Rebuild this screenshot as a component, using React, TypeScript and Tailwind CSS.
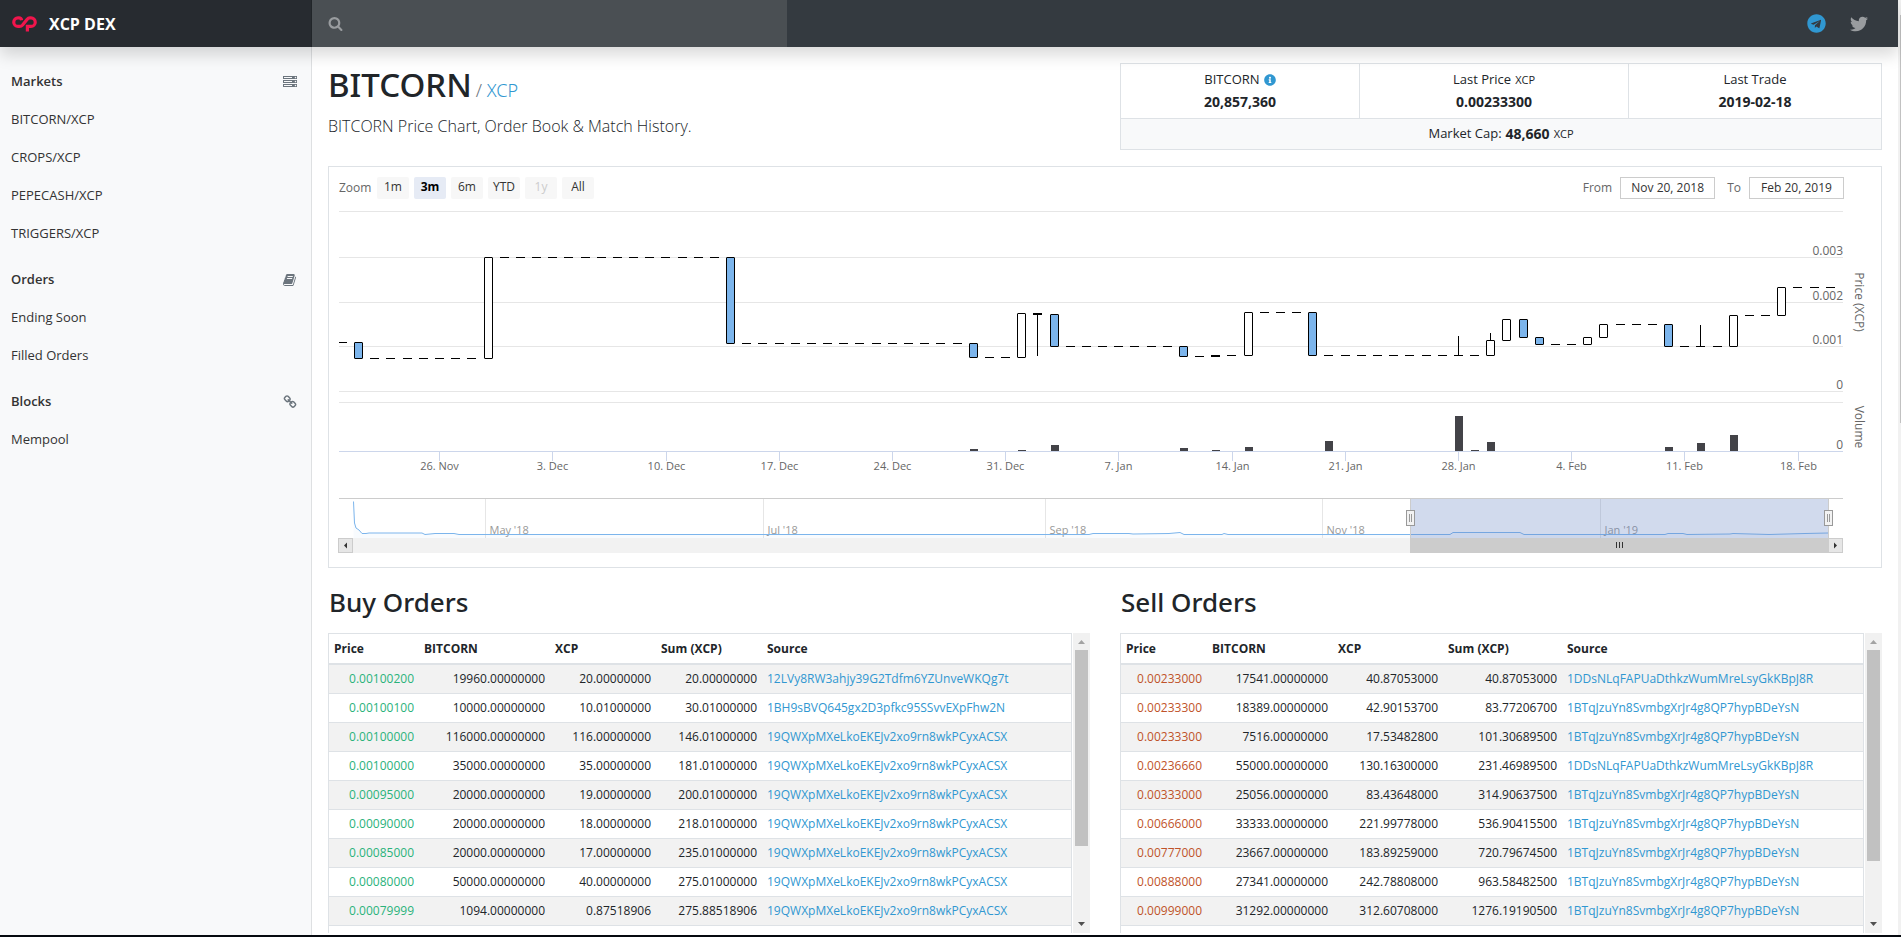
import { ReactNode, useState } from "react";
import { FaInfoCircle, FaTelegram, FaTwitter } from "react-icons/fa";

const SEARCH_PATH =
  "M1216 832q0-185-131.500-316.500t-316.500-131.500-316.500 131.500-131.500 316.500 131.500 316.500 316.500 131.500 316.500-131.500 131.500-316.500zm512 832q0 52-38 90t-90 38q-54 0-90-38l-343-342q-179 124-399 124-143 0-273.500-55.500t-225-150-150-225-55.500-273.500 55.500-273.500 150-225 225-150 273.500-55.500 273.500 55.500 225 150 150 225 55.500 273.500q0 220-124 399l343 343q37 37 37 90z";
const SERVER_PATH =
  "M128 1408h1024v-128h-1024v128zm0-512h1024v-128h-1024v128zm1568 448q0-40-28-68t-68-28-68 28-28 68 28 68 68 28 68-28 28-68zm-1568-960h1024v-128h-1024v128zm1568 448q0-40-28-68t-68-28-68 28-28 68 28 68 68 28 68-28 28-68zm0-512q0-40-28-68t-68-28-68 28-28 68 28 68 68 28 68-28 28-68zm96 832v384h-1792v-384h1792zm0-512v384h-1792v-384h1792zm0-512v384h-1792v-384h1792z";
const BOOK_PATH =
  "M1639 478q40 57 18 129l-275 906q-19 64-76.500 107.500t-122.500 43.500h-923q-77 0-148.500-53.500t-99.500-131.500q-24-67-2-127 0-4 3-27t4-37q1-8-3-21.500t-3-19.500q2-11 8-21t16.500-23.500 16.500-23.500q23-38 45-91.500t30-91.500q3-10 .5-30t-.5-28q3-11 17-28t17-23q21-36 42-92t25-90q1-9-2.500-32t.5-28q4-13 22-30.500t22-22.500q19-26 42.500-84.500t27.500-96.500q1-8-3-25.500t-2-26.500q2-8 9-18t18-23 17-21q8-12 16.500-30.500t15-35 16-36 19.500-32 26.500-23.500 36-11.500 47.500 5.500l-1 3q38-9 51-9h761q74 0 114 56t18 130l-274 906q-36 119-71.500 153.500t-128.500 34.500h-869q-27 0-38 15-11 16-1 43 24 70 144 70h923q29 0 56-15.500t35-41.500l300-987q7-22 5-57 38 15 59 43zm-1064 2q-4 13 2 22.500t20 9.500h608q13 0 25.500-9.500t16.500-22.500l21-64q4-13-2-22.500t-20-9.500h-608q-13 0-25.500 9.500t-16.500 22.500zm-83 256q-4 13 2 22.500t20 9.500h608q13 0 25.500-9.500t16.500-22.500l21-64q4-13-2-22.500t-20-9.500h-608q-13 0-25.500 9.500t-16.500 22.500z";
const CHAIN_PATH =
  "M1520 1216q0-40-28-68l-208-208q-28-28-68-28-42 0-72 32 3 3 19 18.500t21.500 21.500 15 19 13 25.500 3.500 27.500q0 40-28 68t-68 28q-15 0-27.500-3.500t-25.500-13-19-15-21.500-21.500-18.500-19q-33 31-33 73 0 40 28 68l206 207q27 27 68 27 40 0 68-26l147-146q28-28 28-67zm-703-705q0-40-28-68l-206-207q-28-28-68-28-39 0-68 27l-147 146q-28 28-28 67 0 40 28 68l208 208q27 27 68 27 42 0 72-31-3-3-19-18.500t-21.500-21.500-15-19-13-25.500-3.500-27.500q0-40 28-68t68-28q15 0 27.500 3.500t25.500 13 19 15 21.500 21.500 18.500 19q33-31 33-73zm895 705q0 120-85 203l-147 146q-83 83-203 83-121 0-204-85l-206-207q-83-83-83-203 0-123 88-209l-88-88q-86 88-208 88-120 0-204-84l-208-208q-84-84-84-204t85-203l147-146q83-83 203-83 121 0 204 85l206 207q83 83 83 203 0 123-88 209l88 88q86-88 208-88 120 0 204 84l208 208q84 84 84 204z";

const sections = [
  { title: "Markets", icon: SERVER_PATH, links: ["BITCORN/XCP", "CROPS/XCP", "PEPECASH/XCP", "TRIGGERS/XCP"] },
  { title: "Orders", icon: BOOK_PATH, links: ["Ending Soon", "Filled Orders"] },
  { title: "Blocks", icon: CHAIN_PATH, links: ["Mempool"] },
];

const ranges = ["1m", "3m", "6m", "YTD", "1y", "All"];

type Order = [price: string, amount: string, total: string, sum: string, source: string];

const buyOrders: Order[] = [
  ["0.00100200", "19960.00000000", "20.00000000", "20.00000000", "12LVy8RW3ahjy39G2Tdfm6YZUnveWKQg7t"],
  ["0.00100100", "10000.00000000", "10.01000000", "30.01000000", "1BH9sBVQ645gx2D3pfkc95SSvvEXpFhw2N"],
  ["0.00100000", "116000.00000000", "116.00000000", "146.01000000", "19QWXpMXeLkoEKEJv2xo9rn8wkPCyxACSX"],
  ["0.00100000", "35000.00000000", "35.00000000", "181.01000000", "19QWXpMXeLkoEKEJv2xo9rn8wkPCyxACSX"],
  ["0.00095000", "20000.00000000", "19.00000000", "200.01000000", "19QWXpMXeLkoEKEJv2xo9rn8wkPCyxACSX"],
  ["0.00090000", "20000.00000000", "18.00000000", "218.01000000", "19QWXpMXeLkoEKEJv2xo9rn8wkPCyxACSX"],
  ["0.00085000", "20000.00000000", "17.00000000", "235.01000000", "19QWXpMXeLkoEKEJv2xo9rn8wkPCyxACSX"],
  ["0.00080000", "50000.00000000", "40.00000000", "275.01000000", "19QWXpMXeLkoEKEJv2xo9rn8wkPCyxACSX"],
  ["0.00079999", "1094.00000000", "0.87518906", "275.88518906", "19QWXpMXeLkoEKEJv2xo9rn8wkPCyxACSX"],
];

const sellOrders: Order[] = [
  ["0.00233000", "17541.00000000", "40.87053000", "40.87053000", "1DDsNLqFAPUaDthkzWumMreLsyGkKBpJ8R"],
  ["0.00233300", "18389.00000000", "42.90153700", "83.77206700", "1BTqJzuYn8SvmbgXrJr4g8QP7hypBDeYsN"],
  ["0.00233300", "7516.00000000", "17.53482800", "101.30689500", "1BTqJzuYn8SvmbgXrJr4g8QP7hypBDeYsN"],
  ["0.00236660", "55000.00000000", "130.16300000", "231.46989500", "1DDsNLqFAPUaDthkzWumMreLsyGkKBpJ8R"],
  ["0.00333000", "25056.00000000", "83.43648000", "314.90637500", "1BTqJzuYn8SvmbgXrJr4g8QP7hypBDeYsN"],
  ["0.00666000", "33333.00000000", "221.99778000", "536.90415500", "1BTqJzuYn8SvmbgXrJr4g8QP7hypBDeYsN"],
  ["0.00777000", "23667.00000000", "183.89259000", "720.79674500", "1BTqJzuYn8SvmbgXrJr4g8QP7hypBDeYsN"],
  ["0.00888000", "27341.00000000", "242.78808000", "963.58482500", "1BTqJzuYn8SvmbgXrJr4g8QP7hypBDeYsN"],
  ["0.00999000", "31292.00000000", "312.60708000", "1276.19190500", "1BTqJzuYn8SvmbgXrJr4g8QP7hypBDeYsN"],
];

// Days are counted from Nov 20, y values are in chart units.
// [first day, last day, y] for days without a price change
const flats: [number, number, number][] = [
  [0, 0, 143.5], [2, 8, 159.5], [10, 23, 58.5], [25, 38, 144.5], [40, 41, 158.5], [43, 43, 114.5],
  [43, 43, 115.5], [45, 51, 147.5], [53, 53, 157.5], [54, 54, 156.5], [54, 54, 157.5], [55, 55, 156.5],
  [57, 59, 113.5], [61, 70, 156.5], [75, 76, 145.5], [79, 81, 125.5], [83, 85, 147.5], [87, 88, 116.5],
  [90, 92, 88.5],
];
// [day, top, bottom, falling]
const candles: [number, number, number, boolean][] = [
  [1, 143.5, 159.5, true], [9, 58.5, 159.5, false], [24, 58.5, 144.5, true], [39, 144.5, 158.5, true],
  [42, 114.5, 158.5, false], [44, 115.5, 147.5, true], [52, 147.5, 157.5, true], [56, 113.5, 156.5, false],
  [60, 113.5, 156.5, true], [71, 141.5, 156.5, false], [72, 120.5, 141.5, false], [73, 120.5, 138.5, true],
  [74, 138.5, 145.5, true], [77, 138.5, 145.5, false], [78, 125.5, 138.5, false], [82, 125.5, 147.5, true],
  [86, 116.5, 147.5, false], [89, 88.5, 116.5, false],
];
// [day, top, bottom]
const wicks: [number, number, number][] = [[43, 115, 157], [69, 137, 157], [71, 134, 142], [84, 126, 147]];
// [day, height]
const volumes: [number, number][] = [
  [39, 2], [42, 1], [44, 6], [52, 3], [54, 1], [56, 4], [61, 10], [69, 35], [70, 1], [71, 9], [82, 4], [84, 8],
  [86, 16],
];
const weeks = [
  "26. Nov", "3. Dec", "10. Dec", "17. Dec", "24. Dec", "31. Dec", "7. Jan", "14. Jan", "21. Jan", "28. Jan",
  "4. Feb", "11. Feb", "18. Feb",
];
const priceLabels: [string, number][] = [["0.003", 56], ["0.002", 101], ["0.001", 145], ["0", 190], ["0", 250]];
const months: [string, number][] = [
  ["May '18", 156.5], ["Jul '18", 434.5], ["Sep '18", 716.5], ["Nov '18", 993.5], ["Jan '19", 1271.5],
];

const dayX = (day: number, start = 13.48) => Math.floor(start + day * 16.172) + 0.5;
const NAV_LINE =
  "M24.500 302.500L25.500 324L27 329L30 331L33 334.500L37 334.500L40 334L93 334L96 335.500L106 334.500L125 334.500L130 335.500L210 335.500L760 335.500L764 334.500L800 334.500L804 335L840 334.500L851 333.500L855 335.500L893 335.500L895 334.500L899 335.500L1070 335.500L1121 335.500L1124 333.500L1191 333.500L1195 335.500L1336 335.500L1339 334.500L1354 334.500L1358 335.500L1401 335L1404 334.500L1440 335.500L1476 334.500L1499 334";

function Glyph({ d, className }: { d: string; className: string }) {
  return (
    <svg className={className} viewBox="0 0 1792 1792" fill="currentColor" aria-hidden="true">
      <path d={d} />
    </svg>
  );
}

function Header() {
  return (
    <header className="relative z-10 flex h-[47px] items-stretch bg-[#343a40] shadow-[0_8px_16px_rgba(0,0,0,0.15)]">
      <a href="#" className="flex w-[312px] shrink-0 items-center gap-3 border-r border-[#212529] bg-[#272b30] pl-3 text-base font-bold text-white">
        <svg className="h-4 w-[25px]" viewBox="0 0 25 16" fill="none" stroke="#f0154c" strokeWidth="3.2" aria-hidden="true">
          <path d="M9.600 4.200Q9.200 1.900 7 1.900H6A4.200 4.200 0 0 0 6 10.400H7.500Q9.400 10.400 10.600 9L15 3.400Q16.200 1.900 18 1.900H19A4.200 4.200 0 0 1 19 10.400H15.400V15.600" />
        </svg>
        XCP DEX
      </a>
      <label className="flex w-1/4 items-center bg-[#4a4f53] pl-4 text-[#999c9f]">
        <Glyph d={SEARCH_PATH} className="size-[15px]" />
        <input type="text" aria-label="Search" className="h-full min-w-0 flex-1 bg-transparent px-2 text-sm text-white outline-none" />
      </label>
      <nav className="ml-auto flex items-center gap-6 pr-[30px]">
        <a href="#" aria-label="Telegram" className="text-[#3097d1]">
          <FaTelegram className="size-[19px]" />
        </a>
        <a href="#" aria-label="Twitter" className="text-[#999c9f]">
          <FaTwitter className="size-[18px]" />
        </a>
      </nav>
    </header>
  );
}

function Sidebar() {
  return (
    <aside className="w-[312px] shrink-0 border-r border-[#dee0e2] bg-[#f8f9fa] pt-4 text-[13px] text-[#333333]">
      {sections.map((section) => (
        <section key={section.title} className="mb-2">
          <h6 className="flex h-[38px] items-center justify-between pr-[14px] pl-[11px] font-semibold">
            {section.title}
            <Glyph d={section.icon} className="size-[14px] text-[#6c757d]" />
          </h6>
          <ul>
            {section.links.map((link) => (
              <li key={link}>
                <a href="#" className="flex h-[38px] items-center pl-[11px]">
                  {link}
                </a>
              </li>
            ))}
          </ul>
        </section>
      ))}
    </aside>
  );
}

function Stat({ label, value }: { label: ReactNode; value: string }) {
  return (
    <div className="flex flex-col items-center justify-center border-r border-[#dee2e6] last:border-r-0">
      <div className="flex h-[22px] items-center gap-1">{label}</div>
      <div className="flex h-[22px] items-center text-sm font-bold">{value}</div>
    </div>
  );
}

function Stats() {
  return (
    <div className="border border-[#dee2e6] text-[13px]">
      <div className="grid h-[54px] grid-cols-[239fr_269fr_252fr]">
        <Stat
          label={
            <>
              BITCORN <FaInfoCircle className="size-3 text-[#3097d1]" />
            </>
          }
          value="20,857,360"
        />
        <Stat
          label={
            <>
              Last Price <span className="text-[11px]">XCP</span>
            </>
          }
          value="0.00233300"
        />
        <Stat label="Last Trade" value="2019-02-18" />
      </div>
      <div className="flex h-[31px] items-center justify-center gap-1 border-t border-[#dee2e6] bg-[#f8f9fa]">
        Market Cap: <b className="text-sm">48,660</b> <span className="text-[11px]">XCP</span>
      </div>
    </div>
  );
}

function Chart() {
  return (
    <svg className="block h-auto w-full" viewBox="0 0 1552 368" fontSize="12" fill="#666666" role="img" aria-label="BITCORN price and volume">
      {/* grid */}
      <path d="M10 12.500H1514M10 58.500H1514M10 103.500H1514M10 147.500H1514M10 192.500H1514M10 203.500H1514" stroke="#e6e6e6" />
      <path d="M10 252.500H1514" stroke="#ccd6eb" />

      {/* price */}
      <g stroke="#000000">
        {flats.map(([from, to, y]) =>
          Array.from({ length: to - from + 1 }, (_, i) => {
            const x = dayX(from + i);
            return <path key={`${from}-${i}-${y}`} d={`M${Math.max(x - 4.5, 10)} ${y}H${x + 4.5}`} />;
          })
        )}
        {wicks.map(([day, top, bottom]) => (
          <path key={day} d={`M${dayX(day)} ${top}V${bottom}`} />
        ))}
        {candles.map(([day, top, bottom, falling]) => (
          <rect key={day} x={dayX(day) - 4} y={top} width="8" height={bottom - top} rx="0.5" fill={falling ? "#7cb5ec" : "#ffffff"} />
        ))}
      </g>

      {/* volume */}
      {volumes.map(([day, height]) => (
        <rect key={day} x={dayX(day) - 3.5} y={252 - height} width="8" height={height} fill="#434348" />
      ))}

      {weeks.map((week, i) => {
        const x = dayX(6 + i * 7, 13.68);
        return (
          <g key={week}>
            <path d={`M${x} 253V262`} stroke="#ccd6eb" />
            <text x={x} y="271" fontSize="11" textAnchor="middle">{week}</text>
          </g>
        );
      })}
      {priceLabels.map(([label, y]) => (
        <text key={y} x="1514" y={y} textAnchor="end">{label}</text>
      ))}
      <text transform="translate(1526 103) rotate(90)" textAnchor="middle">Price (XCP)</text>
      <text transform="translate(1526 228) rotate(90)" textAnchor="middle">Volume</text>

      {/* navigator */}
      {months.map(([month, x]) => (
        <g key={month}>
          <path d={`M${x} 300V339`} stroke="#e6e6e6" />
          <text x={x + 4} y="335" fontSize="11" fill="#999999">{month}</text>
        </g>
      ))}
      <path d={`${NAV_LINE}V339H24.500Z`} fill="#7cb5ec" fillOpacity="0.05" />
      <path d={NAV_LINE} fill="none" stroke="#7cb5ec" />
      <rect x="1081" y="300" width="419" height="39" fill="#6685c2" fillOpacity="0.3" />
      <path d="M10 299.500H1514M1081.500 299.500V339M1499.500 299.500V339" stroke="#cccccc" />
      {[1081, 1499].map((x) => (
        <g key={x} stroke="#999999">
          <rect x={x - 3.5} y="311.500" width="8" height="15" fill="#f2f2f2" />
          <path d={`M${x - 0.5} 315V323M${x + 1.5} 315V323`} />
        </g>
      ))}

      {/* scrollbar */}
      <rect x="24" y="339" width="1058" height="15" fill="#f2f2f2" />
      <rect x="1081" y="339" width="419" height="15" fill="#cccccc" />
      <path d="M1287.500 343V349M1290.500 343V349M1293.500 343V349" stroke="#333333" />
      <rect x="9.500" y="339.500" width="14" height="14" fill="#e6e6e6" stroke="#cccccc" />
      <path d="M18 343.500V349.500L15 346.500Z" fill="#333333" />
      <rect x="1499.500" y="339.500" width="14" height="14" fill="#e6e6e6" stroke="#cccccc" />
      <path d="M1505 343.500V349.500L1508 346.500Z" fill="#333333" />
    </svg>
  );
}

function ChartCard() {
  const [range, setRange] = useState("3m");
  return (
    <section className="mt-4 border border-[#dee2e6] bg-white">
      <div className="flex h-8 items-end pr-[37px] pl-[10px] text-xs text-[#666666]">
        <div className="flex items-center gap-[5px]">
          <span className="w-[33px]">Zoom</span>
          {ranges.map((item) => (
            <button
              key={item}
              onClick={() => setRange(item)}
              disabled={item === "1y"}
              className={`h-[22px] w-8 rounded-xs pb-[2px] leading-[20px] disabled:text-[#cccccc] ${
                item === range ? "bg-[#e6ebf5] font-bold text-black" : "bg-[#f7f7f7] text-[#333333]"
              }`}
            >
              {item}
            </button>
          ))}
        </div>
        <div className="ml-auto flex items-center">
          <label htmlFor="from">From</label>
          <input id="from" defaultValue="Nov 20, 2018" className="ml-2 h-[22px] w-[95px] border border-[#cccccc] pb-[2px] text-center text-[#333333]" />
          <label htmlFor="to" className="ml-3">To</label>
          <input id="to" defaultValue="Feb 20, 2019" className="ml-2 h-[22px] w-[95px] border border-[#cccccc] pb-[2px] text-center text-[#333333]" />
        </div>
      </div>
      <Chart />
    </section>
  );
}

type OrderBookProps = { title: string; orders: Order[]; cols: string[]; priceClass: string; thumbClass: string };

function OrderBook({ title, orders, cols, priceClass, thumbClass }: OrderBookProps) {
  return (
    <section>
      <h2 className="mb-[14px] pl-px font-['Noto_Sans',sans-serif] text-[26px] leading-[34px] font-medium">{title}</h2>
      <div className="flex h-[300px] gap-px">
        <div className="min-w-0 flex-1 overflow-hidden">
          <table className="w-full table-fixed border-separate border-spacing-0 border border-[#dee2e6] text-xs">
            <thead>
              <tr className="h-[30px] text-left">
                {["Price", "BITCORN", "XCP", "Sum (XCP)", "Source"].map((name, i) => (
                  <th key={name} className={`border-b border-[#dee2e6] px-[5px] font-bold ${cols[i]}`}>
                    {name}
                  </th>
                ))}
              </tr>
            </thead>
            <tbody>
              {orders.map(([price, amount, total, sum, source], i) => (
                <tr key={i} className="h-[29px] odd:bg-[#f2f2f2] *:border-t *:border-[#dee2e6] *:px-[5px]">
                  <td className={`text-right ${priceClass}`}>{price}</td>
                  <td className="text-right">{amount}</td>
                  <td className="text-right">{total}</td>
                  <td className="text-right">{sum}</td>
                  <td>
                    <a href="#" className="text-[#3097d1]">{source}</a>
                  </td>
                </tr>
              ))}
              <tr className="h-[29px] *:border-t *:border-[#dee2e6]">
                <td colSpan={5} />
              </tr>
            </tbody>
          </table>
        </div>
        <div className="flex w-[17px] flex-col items-center bg-[#f1f1f1]">
          <svg className="h-[17px] w-[17px]" viewBox="0 0 17 17" aria-hidden="true">
            <path d="M5 11L8.500 7L12 11Z" fill="#a3a3a3" />
          </svg>
          <div className={`w-[13px] bg-[#c1c1c1] ${thumbClass}`} />
          <svg className="mt-auto h-[17px] w-[17px]" viewBox="0 0 17 17" aria-hidden="true">
            <path d="M5 6L8.500 10L12 6Z" fill="#505050" />
          </svg>
        </div>
      </div>
    </section>
  );
}

export default function App() {
  return (
    <div className="flex min-h-screen flex-col overflow-hidden bg-white font-['Open_Sans',sans-serif] text-[#212529]">
      <div className="flex flex-1">
        <div className="flex min-w-0 flex-1 flex-col">
          <Header />
          <div className="flex flex-1">
            <Sidebar />
            <main className="min-w-0 flex-1 px-4 pt-4 pb-[2px]">
              <div className="grid grid-cols-2 gap-[30px]">
                <div>
                  <h1 className="font-['Noto_Sans',sans-serif] text-[33px] leading-[44px] font-medium">
                    BITCORN
                    <small className="ml-1 text-[18px] font-light text-[#6c757d]">
                      / <a href="#" className="text-[#3097d1]">XCP</a>
                    </small>
                  </h1>
                  <p className="text-[16px] leading-7 font-light">BITCORN Price Chart, Order Book &amp; Match History.</p>
                </div>
                <Stats />
              </div>
              <ChartCard />
              <div className="mt-[17px] grid grid-cols-2 gap-[30px]">
                <OrderBook
                  title="Buy Orders"
                  orders={buyOrders}
                  cols={["w-[90px]", "w-[131px]", "w-[106px]", "w-[106px]", ""]}
                  priceClass="text-[#2ab27b]"
                  thumbClass="h-[196px]"
                />
                <OrderBook
                  title="Sell Orders"
                  orders={sellOrders}
                  cols={["w-[86px]", "w-[126px]", "w-[110px]", "w-[119px]", ""]}
                  priceClass="text-[#bf5329]"
                  thumbClass="h-[211px]"
                />
              </div>
            </main>
          </div>
        </div>
        <div className="w-[3px] bg-[#f1f1f1] pt-[15px]">
          <div className="ml-auto h-[408px] w-px bg-[#c1c1c1]" />
        </div>
      </div>
      <div className="h-[2px] bg-[#05090f]" />
    </div>
  );
}
